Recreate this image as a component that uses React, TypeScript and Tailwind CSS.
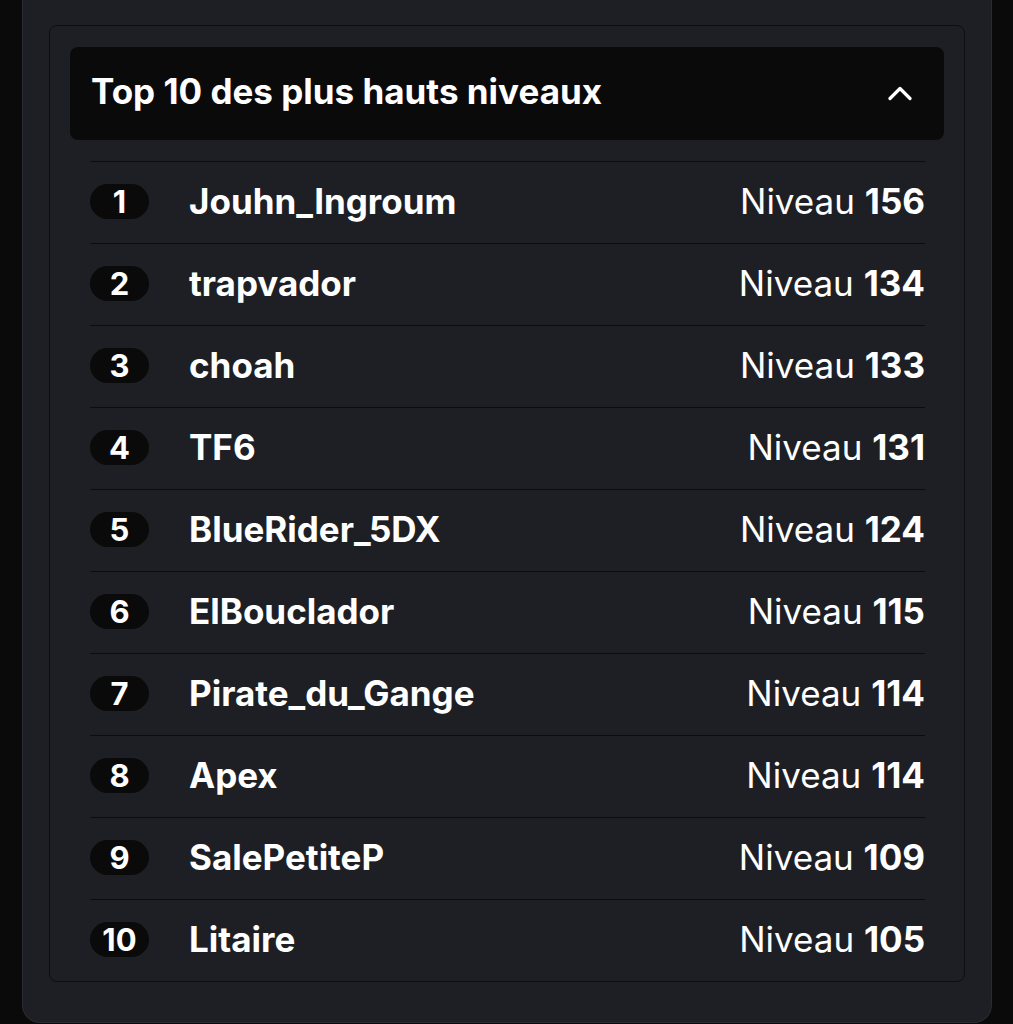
import { useState } from 'react';

const joueurs = [
  { nom: 'Jouhn_Ingroum', niveau: 156 },
  { nom: 'trapvador', niveau: 134 },
  { nom: 'choah', niveau: 133 },
  { nom: 'TF6', niveau: 131 },
  { nom: 'BlueRider_5DX', niveau: 124 },
  { nom: 'ElBouclador', niveau: 115 },
  { nom: 'Pirate_du_Gange', niveau: 114 },
  { nom: 'Apex', niveau: 114 },
  { nom: 'SalePetiteP', niveau: 109 },
  { nom: 'Litaire', niveau: 105 },
];

export default function App() {
  const [ouvert, setOuvert] = useState(true);

  return (
    <div className="min-h-screen bg-[#0a0a0a] pl-[22px] pr-[21px] font-['Inter',sans-serif] text-white">
      {/* carte extérieure (le haut sort de l'écran) */}
      <div className="bg-[#1e1f24] border-x border-b border-[#2a2b31] rounded-b-[18px] pt-[25px] px-[26px] pb-[40px]">
        <div className="bg-[#1e1f24] border border-[#0e0e10] rounded-[8px] pt-[21px] px-5">
          <button
            onClick={() => setOuvert(!ouvert)}
            className="w-full h-[93px] bg-[#0a0a0a] rounded-[8px] flex items-center justify-between pl-[21px] pr-[32px]"
          >
            <span className="text-[35px] font-bold leading-none pb-[4px]">Top 10 des plus hauts niveaux</span>
            <svg width="24" height="15" viewBox="0 0 24 15" fill="none">
              <path
                d={ouvert ? 'M2 12.5 12 2.5l10 10' : 'M2 2.5l10 10 10-10'}
                stroke="white"
                strokeWidth="3.2"
                strokeLinecap="round"
                strokeLinejoin="round"
              />
            </svg>
          </button>

          {ouvert && (
            <ul className="mt-[21px] ml-5 mr-[19px]">
              {joueurs.map((j, i) => (
                <li key={j.nom} className="h-[82px] border-t border-[#0c0c0e] flex items-center">
                  <span className="w-[59px] h-[35px] mb-[2px] rounded-full bg-[#0a0a0a] flex items-center justify-center text-[31px] font-bold leading-none">
                    {i + 1}
                  </span>
                  <span className="ml-[40px] text-[35px] font-bold leading-none pb-[3px]">{j.nom}</span>
                  <span className="ml-auto text-[35px] leading-none pb-[3px]">
                    Niveau <span className="font-bold">{j.niveau}</span>
                  </span>
                </li>
              ))}
            </ul>
          )}
        </div>
      </div>
    </div>
  );
}
